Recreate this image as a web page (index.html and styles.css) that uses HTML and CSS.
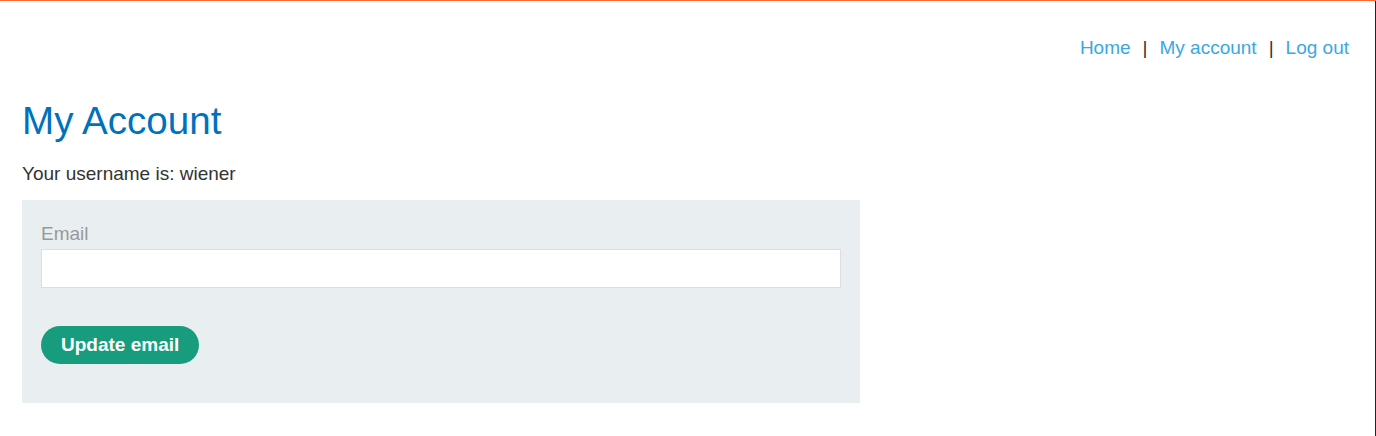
FILE: index.html
```html
<!DOCTYPE html>
<html lang="en">
<head>
<meta charset="utf-8">
<title>My Account</title>
<link rel="stylesheet" href="styles.css">
</head>
<body>
<div class="frame">
  <div class="inner">
    <header class="top-nav">
      <a class="nav-link" href="#">Home</a>
      <span class="sep">|</span>
      <a class="nav-link" href="#">My account</a>
      <span class="sep">|</span>
      <a class="nav-link" href="#">Log out</a>
    </header>
    <main class="content">
      <h1 class="title">My Account</h1>
      <p class="username">Your username is: wiener</p>
      <form class="email-form">
        <label class="label" for="email">Email</label>
        <input class="input" id="email" type="email" name="email">
        <button class="button" type="button">Update email</button>
      </form>
    </main>
  </div>
</div>
</body>
</html>
```
FILE: styles.css
```css
html, body {
  margin: 0;
  padding: 0;
  background: #fff;
}
body {
  font-family: "Liberation Sans", Arial, sans-serif;
  font-size: 19px;
  line-height: 22px;
  color: #333332;
}
.frame {
  border-top: 1px solid #ff6633;
}
.inner {
  border-right: 1px solid #222;
  min-height: calc(100vh - 1px);
  box-sizing: border-box;
}
.top-nav {
  display: flex;
  justify-content: flex-end;
  align-items: center;
  gap: 12px;
  padding: 36px 26px 0 0;
  height: 22px;
}
.nav-link {
  color: #3aa8e2;
  text-decoration: none;
}
.sep {
  color: #333332;
}
.content {
  padding: 0 22px;
}
.title {
  margin: 40px 0 0;
  font-size: 38.6px;
  line-height: 44px;
  font-weight: normal;
  color: #0071bc;
}
.username {
  margin: 20px 0 15px;
}
.email-form {
  width: 800px;
  background: #e9eef1;
  padding: 23px 19px 39px;
  display: flex;
  flex-direction: column;
  align-items: flex-start;
}
.label {
  color: #999;
}
.input {
  margin-top: 4px;
  width: 800px;
  height: 39px;
  box-sizing: border-box;
  border: 1px solid #dedede;
  background: #fff;
  font: inherit;
  padding: 0 8px;
}
.button {
  margin-top: 38px;
  background: #179c7e;
  color: #fff;
  border: none;
  border-radius: 20px;
  font: inherit;
  font-weight: bold;
  line-height: 22px;
  padding: 8px 20px;
  cursor: pointer;
}
```
